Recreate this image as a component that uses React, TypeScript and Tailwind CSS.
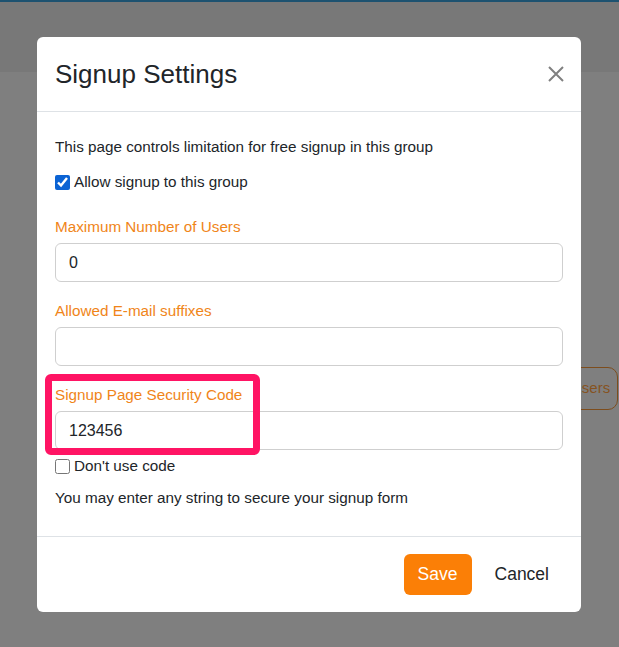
const font = { fontFamily: '"Liberation Sans", Arial, sans-serif' };

const Field = ({
  label,
  value,
  className,
}: {
  label: string;
  value: string;
  className?: string;
}) => (
  <div className={className}>
    <div className="text-[15.25px] leading-[22px] text-[#f08519]">{label}</div>
    <input
      readOnly
      value={value}
      className="mt-[5px] block h-[39px] w-full rounded-[6px] border border-[#cfcfcf] px-[13px] text-[16px] text-[#212529] outline-none"
    />
  </div>
);

export default function App() {
  return (
    <div
      className="relative h-[647px] w-full overflow-hidden bg-[#7f7f7f]"
      style={font}
    >
      {/* page behind the overlay */}
      <div className="h-[2px] bg-[#1d5270]" />
      <div className="h-[70px] bg-[#787878]" />
      <div className="mt-[295px] flex justify-end">
        <div className="mr-[1px] flex h-[43px] w-[80px] items-center rounded-[10px] border border-[#7d4d1d] pl-[32px] text-[15px] text-[#86531f]">
          Users
        </div>
      </div>

      {/* modal */}
      <div className="absolute left-[37px] top-[37px] w-[544px] rounded-[6px] bg-white text-[#212529]">
        <div className="flex h-[75px] items-center justify-between border-b border-[#dee2e6] pl-[18px] pr-[17px]">
          <h2 className="text-[26px] leading-[30px]">Signup Settings</h2>
          <svg width="16" height="16" viewBox="0 0 16 16" className="text-[#808080]">
            <path d="M1 1L15 15M15 1L1 15" stroke="currentColor" strokeWidth="2" fill="none" />
          </svg>
        </div>

        <div className="px-[18px] pb-[27px] pt-[24px] text-[15.25px] leading-[22px]">
          <p>This page controls limitation for free signup in this group</p>
          <label className="mt-[13px] flex items-center gap-[4px]">
            <input
              type="checkbox"
              defaultChecked
              className="m-0 h-[15px] w-[15px] accent-[#0b63d4]"
            />
            <span>Allow signup to this group</span>
          </label>

          <Field className="mt-[23px]" label="Maximum Number of Users" value="0" />
          <Field className="mt-[18px]" label="Allowed E-mail suffixes" value="" />
          <Field className="mt-[18px]" label="Signup Page Security Code" value="123456" />

          <label className="mt-[5px] flex items-center gap-[4px]">
            <input type="checkbox" className="m-0 h-[15px] w-[15px]" />
            <span>Don't use code</span>
          </label>
          <p className="mt-[10px]">You may enter any string to secure your signup form</p>
        </div>

        <div className="flex items-center justify-end gap-[23px] border-t border-[#dee2e6] px-[32px] py-[17px]">
          <button className="h-[41px] w-[68px] rounded-[6px] bg-[#fb7f06] text-[17.5px] text-white">
            Save
          </button>
          <button className="text-[17.5px] text-[#212529]">Cancel</button>
        </div>
      </div>

      {/* highlight annotation */}
      <div className="absolute left-[45px] top-[374px] h-[81px] w-[215px] rounded-[6px] border-[7px] border-[#ff1464]" />
    </div>
  );
}
